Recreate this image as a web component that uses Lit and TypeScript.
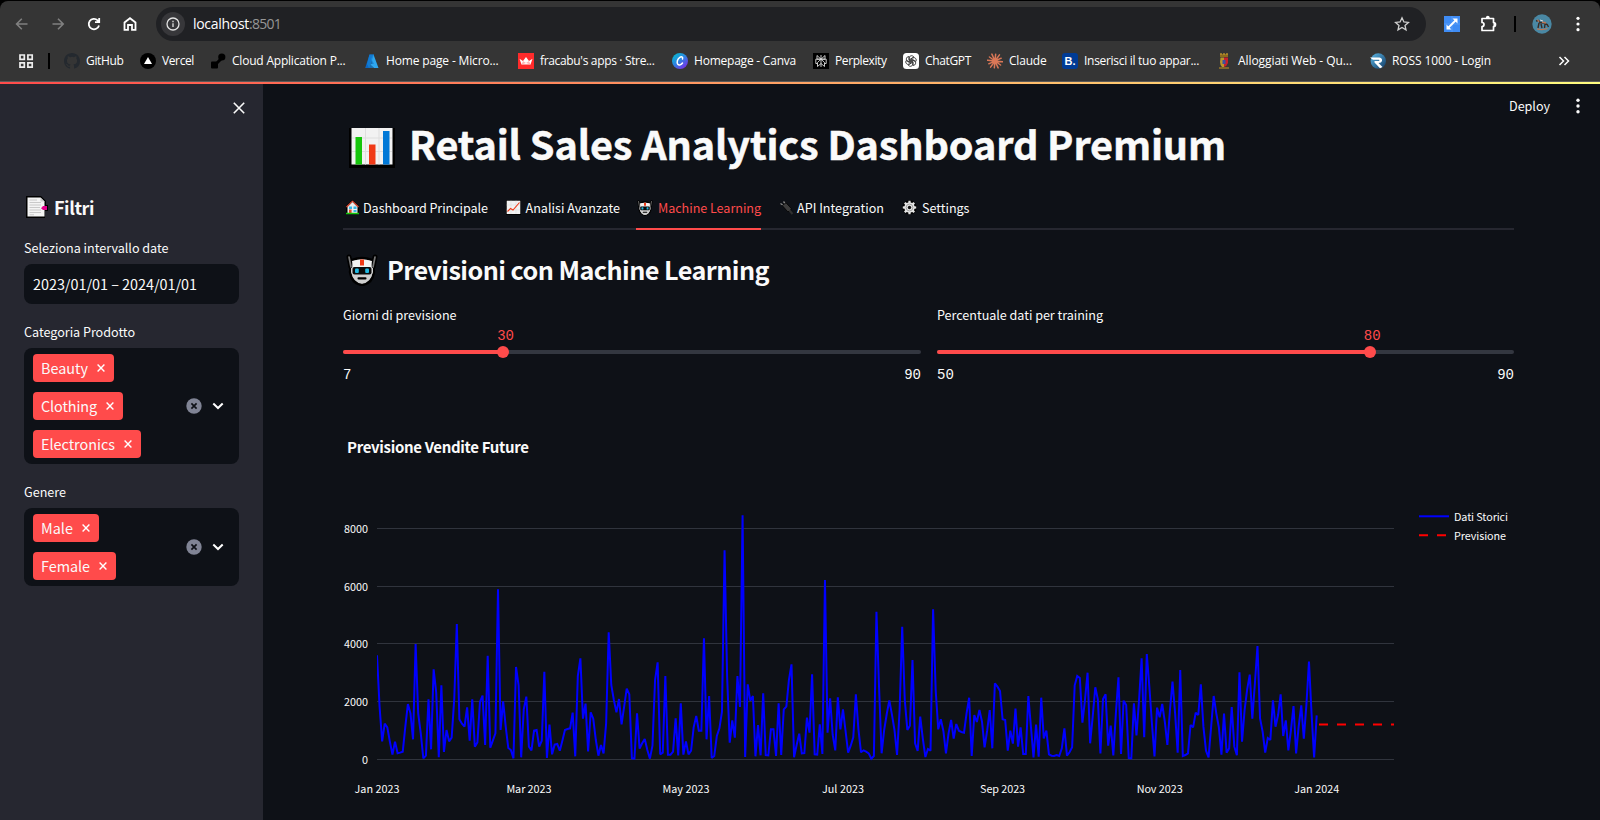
import { LitElement, html, svg, css } from "lit";
import { customElement, property, query } from "lit/decorators.js";

const TAU = Math.PI * 2;

/** One line of text whose tracking is adjusted so that it fills a given width. */
@customElement("fit-text")
class FitText extends LitElement {
  @property() text = "";
  @property({ type: Number }) w = 0;
  @query("span") span!: HTMLSpanElement;
  static styles = css`
    :host { display: inline-block; white-space: nowrap; flex: none; }
    span { display: inline-block; }
  `;
  render() {
    return html`<span>${this.text}</span>`;
  }
  updated() {
    this.style.width = `${this.w}px`;
    this.span.style.letterSpacing = "0px";
    const n = this.text.length;
    const natural = this.span.getBoundingClientRect().width;
    this.span.style.letterSpacing = `${((this.w - natural) / n).toFixed(4)}px`;
  }
}

const gearPath = (cx: number, cy: number, r1: number, r2: number, n: number) => {
  const pts: string[] = [];
  for (let i = 0; i < n; i++) {
    const a = (i / n) * TAU;
    const s = TAU / n;
    for (const [o, r] of [[-0.3, r1], [-0.2, r2], [0.2, r2], [0.3, r1]])
      pts.push(`${(cx + Math.cos(a + o * s) * r).toFixed(2)},${(cy + Math.sin(a + o * s) * r).toFixed(2)}`);
  }
  return "M" + pts.join("L") + "Z";
};

const rays = (n: number, r: number) =>
  Array.from({ length: n }, (_, i) => {
    const a = (i / n) * TAU + 0.1;
    const q = r * (i % 2 ? 0.9 : 1);
    return `M8 8L${(8 + Math.cos(a) * q).toFixed(2)} ${(8 + Math.sin(a) * q).toFixed(2)}`;
  }).join("");

const robot = (size: number) => html`<svg width=${size} height=${size} viewBox="0 0 32 32">
  <path d="M3 3L5 13M29 3L27 13" stroke="#000" stroke-width="5" stroke-linecap="round" />
  <path d="M6 6Q16 2 26 6L28 18Q26 30 16 31Q6 30 4 18Z" fill="#d0d0d0" stroke="#000" stroke-width="2.500" />
  <path d="M3 3L5 13M29 3L27 13" stroke="#777" stroke-width="1.700" stroke-linecap="round" />
  <path d="M6 7Q16 4 26 7L25 13H7Z" fill="#f2f2f2" />
  <path d="M5 18Q8 28.500 16 29.500Q24 28.500 27 18V14H5Z" fill="#cfcfcf" />
  <rect x="14" y="5.500" width="4" height="6" fill="#f03a17" />
  <rect x="6.500" y="13" width="19" height="7.500" rx="2" fill="#0a0a0a" />
  <rect x="9" y="14.500" width="3.800" height="4.500" rx="1" fill="#22b8e0" />
  <rect x="19.200" y="14.500" width="3.800" height="4.500" rx="1" fill="#22b8e0" />
  <rect x="11.500" y="23.300" width="9" height="2.200" rx="1" fill="#000" />
</svg>`;

const emoji = {
  bars: html`<svg width="46" height="40" viewBox="0 0 46 40">
    <rect width="46" height="40" fill="#000" />
    <rect x="2.500" y="0" width="41" height="36.500" fill="#f2f2f2" />
    <path d="M3 10H43M3 23.500H43M16.500 0V36.500M30 0V36.500" stroke="#dedede" />
    <rect x="6.500" y="9" width="6.500" height="27.500" fill="#16c60c" />
    <rect x="20" y="16.500" width="6.500" height="20" fill="#f03a17" />
    <rect x="34" y="3" width="6.500" height="33.500" fill="#0078d7" />
  </svg>`,
  tabsPage: html`<svg width="22" height="22" viewBox="0 0 22 22">
    <path d="M0 0H15L20 5V9H22V15H19V22H0Z" fill="#000" />
    <path d="M1.500 1.500H14.500L18.500 5.500V20.500H1.500Z" fill="#f4f4f4" />
    <path d="M14.500 1.500V5.500H18.500Z" fill="#ccc" />
    <path d="M3.500 4H11M3.500 6.500H15M3.500 9H15M3.500 11.500H14M3.500 14H15M3.500 16.500H15M3.500 18.800H8" stroke="#c4c4c4" stroke-width=".9" />
    <path d="M15 12.200L17 10H21V14H17Z" fill="#e3008c" />
  </svg>`,
  house: html`<svg width="15" height="15" viewBox="0 0 15 15">
    <path d="M1 6L7.500 0L14 6V14H1Z" fill="#000" />
    <path d="M2.500 7L7.500 2L12.500 7V13H2.500Z" fill="#eee" />
    <path d="M1.500 7L7.500 1.200L13.500 7" fill="none" stroke="#f0533a" stroke-width="1.100" />
    <rect x="4" y="6.500" width="3" height="2.500" fill="#35b6e6" /><rect x="8.500" y="6.500" width="3" height="2.500" fill="#35b6e6" />
    <rect x="4" y="9.500" width="2.600" height="4" fill="#e5452c" /><rect x="8.500" y="10" width="3" height="2" fill="#35b6e6" />
    <path d="M1 13.500H14" stroke="#16c60c" stroke-width="1.500" />
  </svg>`,
  trend: html`<svg width="15" height="15" viewBox="0 0 15 15">
    <rect width="15" height="15" fill="#000" /><rect x=".7" y=".7" width="13.600" height="13.300" fill="#f2f2f2" />
    <path d="M.7 5H14M.7 10H14M5 .7V14M10 .7V14" stroke="#dcdcdc" stroke-width=".6" />
    <path d="M1.500 11.500L4.500 8.500L7 10L13.500 2.500" fill="none" stroke="#f03a17" stroke-width="1.100" />
  </svg>`,
  plug: html`<svg width="15" height="15" viewBox="0 0 15 15">
    <path d="M1.500 3.500L4.500 5.500M4.500 1.500L6.500 4" stroke="#888" stroke-width="1.300" />
    <path d="M3.200 5.500L7 2.800L12.300 8.500L11 11.500L8.500 11.500Z" fill="#3d3d3d" stroke="#000" stroke-width=".8" />
    <path d="M10.500 10.500L13.500 14" stroke="#303030" stroke-width="2" />
  </svg>`,
  gear: html`<svg width="15" height="15" viewBox="0 0 15 15">
    <circle cx="7.500" cy="7.500" r="7.200" fill="#000" />
    <path d=${gearPath(7.5, 7.5, 5.2, 6.8, 8)} fill="#e4e4e4" />
    <circle cx="7.500" cy="7.500" r="3.400" fill="none" stroke="#a2a2a2" />
    <circle cx="7.500" cy="7.500" r="1.700" fill="#111" />
  </svg>`,
};

const star = "M8 1.800L9.900 6L14.400 6.400L11 9.400L12 13.900L8 11.500L4 13.900L5 9.400L1.600 6.400L6.100 6Z";

const favicon = {
  github: svg`<path fill="#24292f" d="M8 0C3.580 0 0 3.580 0 8c0 3.540 2.290 6.530 5.470 7.590.4.070.55-.17.55-.38v-1.490c-2.010.37-2.530-.49-2.690-.94-.09-.23-.48-.94-.82-1.130-.28-.15-.68-.52-.01-.53.63-.01 1.080.58 1.230.82.72 1.210 1.870.87 2.330.66.07-.52.28-.87.51-1.070-1.780-.2-3.640-.89-3.640-3.950 0-.87.31-1.590.82-2.150-.08-.2-.36-1.020.08-2.120 0 0 .67-.21 2.200.82a7.600 7.600 0 0 1 4 0c1.530-1.040 2.200-.82 2.200-.82.44 1.100.16 1.920.08 2.120.51.56.82 1.270.82 2.150 0 3.070-1.870 3.750-3.650 3.950.29.25.54.73.54 1.480v2.200c0 .21.15.46.55.38A8 8 0 0 0 16 8c0-4.420-3.580-8-8-8Z"/>`,
  vercel: svg`<circle cx="8" cy="8" r="8"/><path d="M8 4L12 11H4Z" fill="#fff"/>`,
  cloud: svg`<rect x="1" y="8.500" width="7" height="7" rx="1"/><circle cx="11.800" cy="4" r="3.600"/><path d="M6 9L11 3.500L13 6L8 11Z"/>`,
  azure: svg`<path d="M5.500 1.500H10L5.200 15H1.200Z" fill="#0b66c2"/><path d="M9.500 1.500L14.500 15H10L6 11.500L8.500 10.500L7 6Z" fill="#2fa6ee"/><path d="M5.500 1.500H10L8 7L10 11H6L10 15H5L3 11Z" fill="#1481d6" opacity=".75"/>`,
  streamlit: svg`<rect width="16" height="16" fill="#ff2b2b"/><path d="M1.500 5.800L5 8L8 4L11 8L14.500 5.800L12.500 11.500H3.500Z" fill="#fff"/><path d="M5 8L8 10L3.500 11.500Z M11 8L8 10L12.500 11.500Z" fill="#ffb3b3"/>`,
  canva: svg`<defs><linearGradient id="cv" x1="0" y1="0" x2=".8" y2="1"><stop offset="0" stop-color="#00c4cc"/><stop offset=".5" stop-color="#2a86e0"/><stop offset="1" stop-color="#7d2ae8"/></linearGradient></defs><circle cx="8" cy="8" r="8" fill="url(#cv)"/><path d="M10.500 6C11.200 4 9.500 3.200 7.800 4.300C5.300 6 4.500 9.600 5.800 11.300C7 12.700 9.300 11.800 10.500 10" fill="none" stroke="#fff" stroke-width="1.500" stroke-linecap="round"/>`,
  perplexity: svg`<rect width="16" height="16" fill="#000"/><path d="M4 2.500L8 6.200L12 2.500V6.200H4ZM8 2V14M2.800 6.200H13.200V10.500H11.500M2.800 6.200V10.500H4.500M8 6.200L4.500 9.500V13.500L8 10.500L11.500 13.500V9.500Z" fill="none" stroke="#ddd" stroke-width=".9"/>`,
  chatgpt: svg`<rect width="16" height="16" rx="3.500" fill="#fff"/><g fill="none" stroke="#333" stroke-width=".85">${[0, 60, 120, 180, 240, 300].map(
    (a) => svg`<path transform="rotate(${a} 8 8)" d="M6.200 9.200V5A2.400 2.400 0 0 1 10.800 4.100L8 5.700V8"/>`
  )}</g>`,
  claude: svg`<path d=${rays(12, 7.6)} stroke="#d97757" stroke-width="1.500" stroke-linecap="round"/>`,
  crest: svg`<path d="M4 1H12V4H4Z" fill="#8d6b1c"/><path d="M5 0V2M8 0V2M11 0V2" stroke="#b9922e" stroke-width="1.400"/><path d="M4.500 4.500H8V14H6Q4 12 4 9Z" fill="#b8962e"/><path d="M8 4.500H12V10Q11 13 8 14Z" fill="#c81f2c"/><rect x="6.500" y="7" width="3" height="4" fill="#3d4fa0"/><path d="M3 15H13" stroke="#947328" stroke-width="1.600"/>`,
  ross: svg`<defs><linearGradient id="rs" x1="0" y1="0" x2="1" y2="1"><stop offset="0" stop-color="#5bb7e6"/><stop offset="1" stop-color="#123a63"/></linearGradient></defs><circle cx="8.300" cy="8" r="7.700" fill="url(#rs)"/><path d="M0 4.500H9.500Q12.500 5 12 8Q11.500 10 8.500 10L12.500 14L10 15.300L4.500 9.500V8H9Q10 7.300 9 6.700H3Z" fill="#fff"/>`,
};

type Bookmark = { icon: keyof typeof favicon | "booking"; label: string; w: number };
const bookmarks: Bookmark[] = [
  { icon: "github", label: "GitHub", w: 37.5 },
  { icon: "vercel", label: "Vercel", w: 32 },
  { icon: "cloud", label: "Cloud Application P...", w: 113.5 },
  { icon: "azure", label: "Home page - Micro...", w: 112.5 },
  { icon: "streamlit", label: "fracabu's apps · Stre...", w: 114.5 },
  { icon: "canva", label: "Homepage - Canva", w: 102 },
  { icon: "perplexity", label: "Perplexity", w: 51.5 },
  { icon: "chatgpt", label: "ChatGPT", w: 46 },
  { icon: "claude", label: "Claude", w: 37.5 },
  { icon: "booking", label: "Inserisci il tuo appar...", w: 115 },
  { icon: "crest", label: "Alloggiati Web - Qu...", w: 114 },
  { icon: "ross", label: "ROSS 1000 - Login", w: 99 },
];

@customElement("browser-bar")
class BrowserBar extends LitElement {
  static styles = css`
    :host { display: block; background: #000; color: #fff; font: 12px/16px "Open Sans", "Noto Sans", sans-serif; }
    .frame { height: 81px; margin-top: 1px; box-sizing: border-box; background: #353535; border-radius: 8px 8px 0 0; border-bottom: 1px solid #5a5a5a; padding-top: 6px; }
    .row { display: flex; align-items: center; }
    .top { height: 34px; }
    .nav { display: flex; gap: 16px; padding-left: 12px; width: 156px; box-sizing: border-box; flex: none; }
    svg { display: block; flex: none; }
    .omni { width: 1270px; height: 34px; border-radius: 17px; background: #202124; display: flex; align-items: center; padding: 0 16px 0 5px; box-sizing: border-box; flex: none; }
    .info { width: 24px; height: 24px; border-radius: 50%; background: #37373a; display: grid; place-items: center; margin-right: 8px; }
    .host { font-size: 14px; display: flex; flex: 1; }
    .port { color: #969696; }
    .tools { display: flex; align-items: center; padding-left: 18px; }
    .puzzle { margin-left: 19px; }
    .tools .bar { margin-left: 17px; }
    .avatar { margin-left: 16px; }
    .dots { margin-left: 22px; }
    .bar { width: 2px; height: 16px; background: #000; }
    .marks { height: 38px; padding-top: 1px; }
    .apps { margin: 0 14px 0 19px; }
    .list { display: grid; grid-template-columns: 76px 70px 154px 154px 154px 141px 90px 84px 75px 154px 154px 130px; margin-left: 14px; }
    .mark { display: flex; align-items: center; gap: 6px; }
    .booking { width: 16px; height: 16px; border-radius: 3px; background: #003b95; font: bold 11px/16px "Liberation Sans", sans-serif; text-align: center; flex: none; }
    .more { margin-left: 58px; }
  `;
  render() {
    return html`<div class="frame">
      <div class="row top">
        <div class="nav">
          <svg width="20" height="20" viewBox="0 0 20 20" fill="none" stroke="#808080" stroke-width="1.600"><path d="M15.500 10H5M9.800 4.800L4.600 10L9.800 15.200" /></svg>
          <svg width="20" height="20" viewBox="0 0 20 20" fill="none" stroke="#808080" stroke-width="1.600"><path d="M4.500 10H15.200M10 4.800L15.200 10L10 15.200" /></svg>
          <svg width="20" height="20" viewBox="0 0 20 20" fill="none" stroke="#fff" stroke-width="1.800"><path d="M15 11.500A5.200 5.200 0 1 1 13.600 6.300L15.200 7.800M15.200 4V8.200H11" /></svg>
          <svg width="20" height="20" viewBox="0 0 20 20" fill="none" stroke="#fff" stroke-width="1.800"><path d="M4.500 15.800V8.500L10 4.200L15.500 8.500V15.800H12V11H8V15.800Z" /></svg>
        </div>
        <div class="omni">
          <div class="info"><svg width="14" height="14" viewBox="0 0 14 14" fill="none" stroke="#e3e3e3" stroke-width="1.300"><circle cx="7" cy="7" r="6" /><path d="M7 6.200V10M7 3.800V5.200" /></svg></div>
          <div class="host"><fit-text text="localhost" w="56"></fit-text><fit-text class="port" text=":8501" w="32"></fit-text></div>
          <svg width="16" height="16" viewBox="0 0 16 16"><path d=${star} fill="none" stroke="#d0d0d0" stroke-width="1.300" /></svg>
        </div>
        <div class="tools">
          <svg width="16" height="16" viewBox="0 0 16 16"><rect width="16" height="16" fill="#3f8cf4" /><path d="M0 8H16M8 0V16" stroke="#69a8fa" stroke-width=".6" /><path d="M4.500 11.500L11.500 4.500" stroke="#fff" stroke-width="1.800" /><path d="M8.500 2.500H13.500V7.500ZM2.500 8.500V13.500H7.500Z" fill="#fff" /></svg>
          <svg class="puzzle" width="18" height="18" viewBox="0 0 18 18"><path d="M3 3.500H14.500V7.500Q16.500 7.500 16.500 9.500T14.500 11.500V15.500H3V11.500Q5 11.500 5 9.500T3 7.500Z" fill="none" stroke="#fff" stroke-width="1.700" stroke-linejoin="round" /><path d="M6.800 3Q7 .8 8.800 .8T10.800 3Z" fill="#fff" /><path d="M14.500 7.500Q17 7.500 17 9.500T14.500 11.500Z" fill="#fff" /></svg>
          <div class="bar"></div>
          <svg class="avatar" width="20" height="20" viewBox="0 0 20 20"><circle cx="10" cy="10" r="9.700" fill="#4a88a4" /><path d="M4 7L6.500 6.500L8 8.500L12.500 9L15.500 11M7 9L6 14M9 10L10 14M13 10L12.500 14M15 10L16.500 13" stroke="#3a2a25" stroke-width="1.400" fill="none" /><path d="M5 14.800Q10 16.500 15.500 14.500M5.500 5.500L7 8M10 8L14 9" stroke="#b9795a" stroke-width="1.300" fill="none" /><path d="M8 6L11 7" stroke="#ddd" /></svg>
          <svg class="dots" width="8" height="16" viewBox="0 0 8 16" fill="#fff"><circle cx="4" cy="2.300" r="1.600" /><circle cx="4" cy="8" r="1.600" /><circle cx="4" cy="13.700" r="1.600" /></svg>
        </div>
      </div>
      <div class="row marks">
        <svg class="apps" width="15" height="15" viewBox="0 0 15 15" fill="none" stroke="#eee" stroke-width="1.700"><path d="M1 1H5.300V5.300H1ZM8.900 1H13.200V5.300H8.900ZM1 8.900H5.300V13.200H1ZM8.900 8.900H13.200V13.200H8.900Z" /></svg>
        <div class="bar"></div>
        <div class="list">
          ${bookmarks.map(
            (b) => html`<div class="mark">
              ${b.icon === "booking"
                ? html`<div class="booking">B.</div>`
                : html`<svg width="16" height="16" viewBox="0 0 16 16">${favicon[b.icon]}</svg>`}
              <fit-text text=${b.label} w=${b.w}></fit-text>
            </div>`
          )}
        </div>
        <svg class="more" width="12" height="12" viewBox="0 0 12 12" fill="none" stroke="#fff" stroke-width="1.500"><path d="M1.500 2L5.500 6L1.500 10M6.500 2L10.500 6L6.500 10" /></svg>
      </div>
    </div>`;
  }
}

@customElement("multi-select")
class MultiSelect extends LitElement {
  @property() label = "";
  @property({ type: Array }) items: [string, number][] = [];
  static styles = css`
    :host { display: block; }
    .label { display: block; font-size: 12.6px; line-height: 20px; margin-bottom: 6px; }
    .box { background: #0e1117; border-radius: 8px; display: flex; align-items: center; padding: 6px 15px 6px 9px; box-sizing: border-box; }
    .tags { display: flex; flex-direction: column; align-items: flex-start; gap: 10px; flex: 1; }
    .tag { background: #ff4b4b; border-radius: 4px; height: 28px; display: flex; align-items: center; gap: 9px; padding: 0 9px 0 8px; font-size: 14.4px; line-height: 28px; box-sizing: border-box; }
    .icons { display: flex; gap: 10px; align-items: center; }
    svg { display: block; }
  `;
  render() {
    const [text, w] = this.label.split("|");
    return html`<div class="label"><fit-text text=${text} w=${w}></fit-text></div>
      <div class="box">
        <div class="tags">
          ${this.items.map(
            ([t, tw]) => html`<div class="tag"><fit-text text=${t} w=${tw}></fit-text><svg width="8" height="8" viewBox="0 0 8 8" stroke="#fff" stroke-width="1.400"><path d="M.6.6L7.400 7.400M7.400.6L.6 7.400" /></svg></div>`
          )}
        </div>
        <div class="icons">
          <svg width="16" height="16" viewBox="0 0 16 16"><circle cx="8" cy="8" r="7.700" fill="#808495" /><path d="M5.400 5.400L10.600 10.600M10.600 5.400L5.400 10.600" stroke="#0e1117" stroke-width="1.700" /></svg>
          <svg width="12" height="8" viewBox="0 0 12 8" fill="none" stroke="#fff" stroke-width="2"><path d="M1.300 1.500L6 6L10.700 1.500" /></svg>
        </div>
      </div>`;
  }
}

@customElement("range-slider")
class RangeSlider extends LitElement {
  @property() label = "";
  @property({ type: Number }) labelWidth = 0;
  @property({ type: Number }) min = 0;
  @property({ type: Number }) max = 0;
  @property({ type: Number }) value = 0;
  static styles = css`
    :host { display: block; }
    .label { font-size: 12.6px; line-height: 20px; height: 23px; }
    .values { height: 22px; font: 14px/16px "Liberation Mono", monospace; color: #ff4b4b; }
    .values span { display: inline-block; transform: translateX(-6px); }
    .track { height: 4px; border-radius: 2px; background: #333740; }
    .fill { height: 4px; border-radius: 2px; background: #ff4b4b; display: flex; justify-content: flex-end; align-items: center; }
    .thumb { width: 12px; height: 12px; border-radius: 50%; background: #ff4b4b; margin-right: -6px; flex: none; }
    .ends { display: flex; justify-content: space-between; margin-top: 13px; font: 14px/16px "Liberation Mono", monospace; }
  `;
  render() {
    const pct = ((this.value - this.min) / (this.max - this.min)) * 100;
    return html`<div class="label"><fit-text text=${this.label} w=${this.labelWidth}></fit-text></div>
      <div class="values"><span style="margin-left:${pct}%">${this.value}</span></div>
      <div class="track"><div class="fill" style="width:${pct}%"><div class="thumb"></div></div></div>
      <div class="ends"><span>${this.min}</span><span>${this.max}</span></div>`;
  }
}

// Daily sales from 1 Jan 2023 to 1 Jan 2024, as depth below the top of the plot in thirds of a pixel.
const sales = [
  466, 620, 724, 671, 682, 725, 764, 725, 760, 758, 755, 680, 612, 640, 718, 432, 640, 700, 775, 767,
  598, 748, 508, 578, 772, 556, 756, 690, 724, 713, 598, 372, 658, 671, 680, 622, 722, 598, 740, 727,
  605, 587, 735, 467, 743, 722, 700, 268, 690, 604, 680, 744, 750, 775, 501, 556, 772, 628, 590, 740,
  751, 692, 690, 740, 722, 515, 774, 674, 763, 734, 732, 752, 722, 690, 687, 685, 638, 769, 528, 475,
  656, 611, 754, 637, 656, 720, 767, 735, 760, 670, 397, 555, 600, 637, 597, 673, 620, 566, 583, 775,
  776, 640, 746, 730, 717, 750, 776, 737, 540, 487, 763, 758, 528, 764, 764, 755, 655, 766, 610, 764,
  724, 763, 752, 682, 648, 692, 692, 415, 718, 588, 774, 768, 708, 685, 635, 151, 530, 728, 661, 713,
  528, 621, 46, 771, 553, 602, 588, 769, 675, 766, 580, 765, 766, 688, 688, 768, 610, 765, 628, 620,
  540, 493, 772, 735, 701, 760, 759, 653, 698, 523, 763, 764, 673, 762, 240, 698, 595, 705, 751, 592,
  688, 628, 693, 758, 737, 712, 583, 688, 757, 751, 755, 760, 776, 768, 335, 560, 760, 690, 642, 601,
  643, 690, 765, 630, 380, 600, 690, 677, 480, 730, 753, 650, 715, 771, 747, 752, 328, 570, 688, 658,
  693, 760, 700, 660, 716, 672, 692, 696, 698, 640, 593, 768, 645, 666, 630, 665, 742, 692, 630, 745,
  550, 560, 573, 658, 660, 752, 692, 731, 626, 740, 682, 762, 762, 588, 680, 772, 674, 770, 593, 715,
  692, 763, 767, 768, 765, 768, 745, 685, 767, 757, 742, 556, 528, 534, 668, 600, 518, 730, 650, 562,
  598, 760, 597, 583, 737, 677, 766, 640, 532, 762, 602, 615, 774, 775, 610, 706, 600, 475, 712, 462,
  560, 670, 769, 623, 652, 612, 665, 735, 630, 545, 640, 758, 510, 768, 765, 760, 675, 682, 638, 645,
  553, 680, 752, 772, 680, 588, 640, 682, 764, 641, 758, 745, 621, 740, 766, 517, 725, 630, 568, 524,
  656, 550, 438, 655, 695, 758, 714, 720, 601, 680, 645, 583, 708, 661, 751, 690, 618, 760, 680, 616,
  716, 615, 485, 640, 772, 646,
];

@customElement("sales-chart")
class SalesChart extends LitElement {
  static styles = css`
    :host { display: block; }
    svg { display: block; overflow: visible; }
    text { fill: #fafafa; font: 10.8px "Noto Sans CJK SC", "Noto Sans CJK JP", sans-serif; }
    .title { font-size: 15px; font-weight: 700; }
  `;
  render() {
    const left = 34;
    const right = 1051;
    const top = 100;
    const day = 2.5745;
    const line = sales.map((v, i) => `${(left + i * day).toFixed(2)},${(top + v / 3).toFixed(2)}`).join(" ");
    const grid: [number, number][] = [[8000, 128.5], [6000, 186.5], [4000, 243.5], [2000, 301.5], [0, 359.5]];
    const months: [string, number, number][] = [
      ["Jan 2023", 0, 45], ["Mar 2023", 59, 45], ["May 2023", 120, 47], ["Jul 2023", 181, 42],
      ["Sep 2023", 243, 45], ["Nov 2023", 304, 46], ["Jan 2024", 365, 45],
    ];
    return html`<svg width="1171" height="420" viewBox="0 0 1171 420">
      <defs><clipPath id="plot"><rect x=${left} y=${top} width=${right - left} height="270" /></clipPath></defs>
      <text class="title" x="4" y="52.500" textLength="182">Previsione Vendite Future</text>
      ${grid.map(
        ([v, y]) => svg`<path d="M${left} ${y}H${right}" stroke="#30343d" />
          <text x="25" y=${y + 4.3} text-anchor="end">${v}</text>`
      )}
      ${months.map(
        ([m, d, w]) => svg`<text x=${left + d * day - w / 2} y="393.300" textLength=${w}>${m}</text>`
      )}
      <g clip-path="url(#plot)" fill="none" stroke-width="2">
        <polyline points=${line} stroke="#00f" stroke-miterlimit="2" />
        <path d="M976 324.500H1060" stroke="#f00" stroke-dasharray="9 9" />
      </g>
      <path d="M1076 116.300H1106" stroke="#00f" stroke-width="2" />
      <path d="M1076 135.300H1106" stroke="#f00" stroke-width="2" stroke-dasharray="9 9" />
      <text x="1111" y="121" textLength="54">Dati Storici</text>
      <text x="1111" y="140" textLength="52">Previsione</text>
    </svg>`;
  }
}

@customElement("app-root")
class AppRoot extends LitElement {
  static styles = css`
    :host { display: flex; flex-direction: column; width: 1600px; height: 820px; overflow: hidden; background: #0e1117; color: #fafafa; font-family: "Noto Sans CJK SC", "Noto Sans CJK JP", "Open Sans", sans-serif; }
    svg { display: block; flex: none; }
    .page { flex: 1; display: flex; position: relative; min-height: 0; }
    .stripe { position: absolute; inset: 0 0 auto 0; height: 2px; background: linear-gradient(90deg, #ff4b4b, #fffd80); }
    aside { width: 263px; box-sizing: border-box; background: #262730; padding: 20px 24px 0; flex: none; }
    .close { display: flex; justify-content: flex-end; height: 92px; margin-right: -6px; }
    h3 { margin: 0; display: flex; align-items: center; height: 26px; gap: 6px; padding: 0 0 0 2px; font-size: 18px; font-weight: 600; line-height: 24px; }
    .label { font-size: 12.6px; line-height: 20px; margin: 18px 0 6px; }
    .date { background: #0e1117; border-radius: 8px; height: 40px; padding: 0 9px; font-size: 14.4px; line-height: 39px; }
    .cat { margin-top: 18px; }
    .gen { margin-top: 18px; }
    main { flex: 1; padding: 31px 0 0 80px; min-width: 0; }
    .toolbar { position: absolute; top: 14px; right: 18px; display: flex; align-items: center; gap: 24px; font-size: 12.6px; line-height: 20px; }
    h1 { margin: 0; display: flex; align-items: center; gap: 14px; padding-left: 6px; height: 60px; font-size: 39.6px; line-height: 60px; font-weight: 700; -webkit-text-stroke: 0.5px #fafafa; }
    h1 svg { margin-top: 9px; }
    .tabs { margin-top: 14px; display: flex; gap: 16px; height: 43px; width: 1171px; box-shadow: inset 0 -2px #262730; }
    .tab { display: flex; align-items: center; justify-content: space-between; font-size: 12.6px; line-height: 20px; box-sizing: border-box; border-bottom: 2px solid transparent; padding-left: 2px; }
    .tab:nth-child(3) { padding-left: 1px; }
    .on { color: #ff4b4b; border-color: #ff4b4b; }
    h2 { margin: 20px 0 0; display: flex; align-items: center; gap: 9px; height: 38px; padding-left: 3px; font-size: 25.2px; line-height: 38px; font-weight: 600; }
    h2 svg { margin-top: 2px; }
    .sliders { display: grid; grid-template-columns: 578px 577px; gap: 16px; margin-top: 17px; height: 95px; }
  `;
  render() {
    const tabs: [unknown, string, number, number][] = [
      [emoji.house, "Dashboard Principale", 125, 145],
      [emoji.trend, "Analisi Avanzate", 94.5, 116],
      [robot(16), "Machine Learning", 103, 125],
      [emoji.plug, "API Integration", 87, 107],
      [emoji.gear, "Settings", 47.5, 69.5],
    ];
    return html`<browser-bar></browser-bar>
      <div class="page">
        <aside>
          <div class="close"><svg width="12" height="12" viewBox="0 0 12 12" stroke="#fafafa" stroke-width="1.600"><path d="M.8.8L11.200 11.200M11.200.8L.8 11.200" /></svg></div>
          <h3>${emoji.tabsPage}<fit-text text="Filtri" w="40"></fit-text></h3>
          <div class="label"><fit-text text="Seleziona intervallo date" w="144.5"></fit-text></div>
          <div class="date"><fit-text text="2023/01/01 – 2024/01/01" w="164"></fit-text></div>
          <multi-select class="cat" label="Categoria Prodotto|111" .items=${[["Beauty", 47], ["Clothing", 56], ["Electronics", 74]]}></multi-select>
          <multi-select class="gen" label="Genere|42" .items=${[["Male", 32], ["Female", 49]]}></multi-select>
        </aside>
        <main>
          <h1>${emoji.bars}<fit-text text="Retail Sales Analytics Dashboard Premium" w="817"></fit-text></h1>
          <div class="tabs">
            ${tabs.map(
              ([icon, t, w, tw], i) => html`<div class="tab ${i === 2 ? "on" : ""}" style="width:${tw}px">${icon}<fit-text text=${t} w=${w}></fit-text></div>`
            )}
          </div>
          <h2>${robot(32)}<fit-text text="Previsioni con Machine Learning" w="382"></fit-text></h2>
          <div class="sliders">
            <range-slider label="Giorni di previsione" labelWidth="113.5" min="7" max="90" value="30"></range-slider>
            <range-slider label="Percentuale dati per training" labelWidth="166" min="50" max="90" value="80"></range-slider>
          </div>
          <sales-chart></sales-chart>
        </main>
        <div class="toolbar"><fit-text text="Deploy" w="41"></fit-text><svg width="8" height="16" viewBox="0 0 8 16" fill="#fafafa"><circle cx="4" cy="2.300" r="1.700" /><circle cx="4" cy="8" r="1.700" /><circle cx="4" cy="13.700" r="1.700" /></svg></div>
        <div class="stripe"></div>
      </div>`;
  }
}
